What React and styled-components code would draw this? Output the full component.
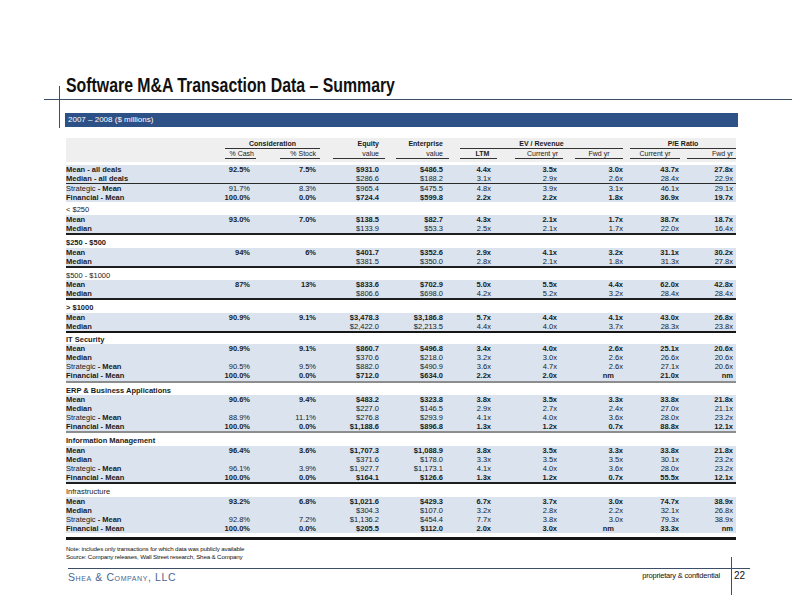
import React from "react";
import styled, { createGlobalStyle } from "styled-components";

const GlobalStyle = createGlobalStyle`
  html, body {
    margin: 0;
    padding: 0;
    background: #ffffff;
  }
  body {
    font-family: "Liberation Sans", Arial, sans-serif;
    color: #111;
  }
`;

const Page = styled.div`
  position: relative;
  width: 792px;
  height: 612px;
  overflow: hidden;
  background: #fff;

  &::before {
    content: "";
    position: absolute;
    left: 59px;
    top: 86px;
    width: 1px;
    height: 42px;
    background: #3c4f66;
  }
`;

const TitleRow = styled.div`
  box-sizing: border-box;
  height: 100px;
  margin-left: 44px;
  padding: 0 0 4px 22px;
  border-bottom: 1px solid #3c4f66;
  display: flex;
  align-items: flex-end;
`;

/* the original face is a condensed grotesque; squeeze Arial-metric bold to its width */
const Title = styled.h1`
  margin: 0;
  font-family: "Liberation Sans", Arial, sans-serif;
  font-weight: bold;
  font-size: 21px;
  line-height: 21px;
  white-space: nowrap;
  color: #111;
  transform: scaleX(0.755);
  transform-origin: left bottom;
`;

const Main = styled.div`
  margin-left: 65px;
  width: 673px;
`;

const SubBar = styled.div`
  margin-top: 13px;
  height: 14px;
  padding-left: 3px;
  background: #2d5186;
  color: #fff;
  font-size: 8px;
  font-weight: normal;
  line-height: 14px;
`;

const TableWrap = styled.div`
  margin: 11px 0 0 1px;
`;

const Grid = styled.table`
  border-collapse: collapse;
  table-layout: fixed;
  width: 670px;
  font-size: 7.5px;
  color: #1a1a1a;
`;

const HeadCell = styled.th`
  background: #efefef;
  padding: 0;
  height: ${(p) => p.$h}px;
  vertical-align: bottom;
  font-weight: bold;
  font-size: 7px;
  text-align: ${(p) => p.$align || "right"};
`;

const HeadLabel = styled.div`
  margin: 0 ${(p) => p.$mr ?? 2}px ${(p) => p.$mb ?? 0}px ${(p) => p.$ml ?? 10}px;
  padding-right: ${(p) => p.$pr ?? 4}px;
  line-height: 9px;
  border-bottom: ${(p) => (p.$line ? "1px solid #333" : "1px solid transparent")};
  font-weight: ${(p) => (p.$light ? "normal" : "bold")};
`;

const SpacerCell = styled.td`
  height: 3px;
  padding: 0;
`;

const EndRule = styled.td`
  height: 4px;
  padding: 0;
  border-bottom: 3px solid #151515;
`;

const BodyRow = styled.tr`
  background: ${(p) => (p.$blue ? "#dae3ee" : "#fff")};

  & > td {
    border-bottom: ${(p) =>
      p.$line === "thick"
        ? "2.5px solid #151515"
        : p.$line === "dark"
        ? "2px solid #1e1e1e"
        : p.$line === "thin"
        ? "1.5px solid #2a2a2a"
        : p.$line === "light"
        ? "2px solid #8d8d8d"
        : "none"};
  }
`;

const Cell = styled.td`
  height: 9.1px;
  padding: 0 ${(p) => p.$pr}px 0 0;
  line-height: 9px;
  text-align: right;
  white-space: nowrap;
  font-weight: ${(p) => (p.$bold ? "bold" : "normal")};
`;

const LabelCell = styled.td`
  height: 9.1px;
  padding: 0;
  line-height: 9px;
  text-align: left;
  white-space: nowrap;
  font-weight: bold;
`;

const Plain = styled.span`
  font-weight: normal;
`;

const GroupCell = styled.td`
  height: ${(p) => p.$h}px;
  padding: 0 0 0.5px 0;
  vertical-align: bottom;
  line-height: 9px;
  font-weight: ${(p) => (p.$light ? "normal" : "bold")};
`;

const Notes = styled.div`
  margin: 5px 0 0 1px;
  font-size: 6.2px;
  line-height: 8px;
  letter-spacing: -0.15px;
  color: #111;
`;

const Footer = styled.div`
  margin: 7px 0 0 68px;
  width: 682px;
  border-top: 1px solid #3c4f66;
  display: flex;
  align-items: flex-start;
`;

const Company = styled.div`
  padding-top: 2px;
  font-variant: small-caps;
  font-size: 10.5px;
  letter-spacing: 0.6px;
  color: #4a6690;
  flex: 1;
`;

const Confidential = styled.div`
  padding: 2px 11px 0 0;
  font-size: 7.5px;
  letter-spacing: -0.2px;
  color: #111;
`;

const PageNum = styled.div`
  position: relative;
  width: 16px;
  padding: 1px 0 0 3px;
  font-size: 10px;
  line-height: 11px;
  color: #111;

  &::before {
    content: "";
    position: absolute;
    left: 0;
    top: -12px;
    width: 1px;
    height: 38px;
    background: #3c4f66;
  }
`;

const cols = [130, 60, 66, 63, 64, 48, 66, 66, 56, 51];

const groups = [
  {
    title: null,
    rows: [
      ["Mean - all deals", "92.5%", "7.5%", "$931.0", "$486.5", "4.4x", "3.5x", "3.0x", "43.7x", "27.8x"],
      ["Median - all deals", "", "", "$286.6", "$188.2", "3.1x", "2.9x", "2.6x", "28.4x", "22.9x"],
      ["Strategic - Mean", "91.7%", "8.3%", "$965.4", "$475.5", "4.8x", "3.9x", "3.1x", "46.1x", "29.1x"],
      ["Financial - Mean", "100.0%", "0.0%", "$724.4", "$599.8", "2.2x", "2.2x", "1.8x", "36.9x", "19.7x"],
    ],
    lines: { 1: "thin" },
  },
  {
    title: "< $250",
    light: true,
    rows: [
      ["Mean", "93.0%", "7.0%", "$138.5", "$82.7", "4.3x", "2.1x", "1.7x", "38.7x", "18.7x"],
      ["Median", "", "", "$133.9", "$53.3", "2.5x", "2.1x", "1.7x", "22.0x", "16.4x"],
    ],
    lines: { 1: "dark" },
  },
  {
    title: "$250 - $500",
    rows: [
      ["Mean", "94%", "6%", "$401.7", "$352.6", "2.9x", "4.1x", "3.2x", "31.1x", "30.2x"],
      ["Median", "", "", "$381.5", "$350.0", "2.8x", "2.1x", "1.8x", "31.3x", "27.8x"],
    ],
    lines: { 1: "dark" },
  },
  {
    title: "$500 - $1000",
    light: true,
    rows: [
      ["Mean", "87%", "13%", "$833.6", "$702.9", "5.0x", "5.5x", "4.4x", "62.0x", "42.8x"],
      ["Median", "", "", "$806.6", "$698.0", "4.2x", "5.2x", "3.2x", "28.4x", "28.4x"],
    ],
    lines: { 1: "dark" },
  },
  {
    title: "> $1000",
    rows: [
      ["Mean", "90.9%", "9.1%", "$3,478.3", "$3,186.8", "5.7x", "4.4x", "4.1x", "43.0x", "26.8x"],
      ["Median", "", "", "$2,422.0", "$2,213.5", "4.4x", "4.0x", "3.7x", "28.3x", "23.8x"],
    ],
    lines: { 1: "thick" },
  },
  {
    title: "IT Security",
    short: true,
    rows: [
      ["Mean", "90.9%", "9.1%", "$860.7", "$496.8", "3.4x", "4.0x", "2.6x", "25.1x", "20.6x"],
      ["Median", "", "", "$370.6", "$218.0", "3.2x", "3.0x", "2.6x", "26.6x", "20.6x"],
      ["Strategic - Mean", "90.5%", "9.5%", "$882.0", "$490.9", "3.6x", "4.7x", "2.6x", "27.1x", "20.6x"],
      ["Financial - Mean", "100.0%", "0.0%", "$712.0", "$634.0", "2.2x", "2.0x", "nm", "21.0x", "nm"],
    ],
    lines: { 3: "light" },
  },
  {
    title: "ERP & Business Applications",
    rows: [
      ["Mean", "90.6%", "9.4%", "$483.2", "$323.8", "3.8x", "3.5x", "3.3x", "33.8x", "21.8x"],
      ["Median", "", "", "$227.0", "$146.5", "2.9x", "2.7x", "2.4x", "27.0x", "21.1x"],
      ["Strategic - Mean", "88.9%", "11.1%", "$276.8", "$293.9", "4.1x", "4.0x", "3.6x", "28.0x", "23.2x"],
      ["Financial - Mean", "100.0%", "0.0%", "$1,188.6", "$896.8", "1.3x", "1.2x", "0.7x", "88.8x", "12.1x"],
    ],
    lines: { 3: "light" },
  },
  {
    title: "Information Management",
    rows: [
      ["Mean", "96.4%", "3.6%", "$1,707.3", "$1,088.9", "3.8x", "3.5x", "3.3x", "33.8x", "21.8x"],
      ["Median", "", "", "$371.6", "$178.0", "3.3x", "3.5x", "3.5x", "30.1x", "23.2x"],
      ["Strategic - Mean", "96.1%", "3.9%", "$1,927.7", "$1,173.1", "4.1x", "4.0x", "3.6x", "28.0x", "23.2x"],
      ["Financial - Mean", "100.0%", "0.0%", "$164.1", "$126.6", "1.3x", "1.2x", "0.7x", "55.5x", "12.1x"],
    ],
    lines: { 3: "dark" },
  },
  {
    title: "Infrastructure",
    light: true,
    rows: [
      ["Mean", "93.2%", "6.8%", "$1,021.6", "$429.3", "6.7x", "3.7x", "3.0x", "74.7x", "38.9x"],
      ["Median", "", "", "$304.3", "$107.0", "3.2x", "2.8x", "2.2x", "32.1x", "26.8x"],
      ["Strategic - Mean", "92.8%", "7.2%", "$1,136.2", "$454.4", "7.7x", "3.8x", "3.0x", "79.3x", "38.9x"],
      ["Financial - Mean", "100.0%", "0.0%", "$205.5", "$112.0", "2.0x", "3.0x", "nm", "33.3x", "nm"],
    ],
    lines: {},
  },
];

const Label = ({ text }) => {
  if (text.startsWith("Strategic")) {
    return (
      <>
        <Plain>Strategic</Plain>
        {text.slice(9)}
      </>
    );
  }
  return text;
};

const isBold = (label) => label.startsWith("Mean") || label.startsWith("Financial");

const padFor = (i, value) => {
  if (i === 9) return 3;
  if (value === "nm") return 15;
  return 6;
};

const App = () => {
  return (
    <Page>
      <GlobalStyle />
      <TitleRow>
        <Title>Software M&amp;A Transaction Data – Summary</Title>
      </TitleRow>
      <Main>
        <SubBar>2007 – 2008 ($ millions)</SubBar>
        <TableWrap>
          <Grid>
            <colgroup>
              {cols.map((w, i) => (
                <col key={i} style={{ width: w }} />
              ))}
            </colgroup>
            <thead>
              <tr>
                <HeadCell $h={11} />
                <HeadCell $h={11} colSpan={2} $align="center">
                  <HeadLabel $line $ml={29} $mr={2} $pr={0}>
                    Consideration
                  </HeadLabel>
                </HeadCell>
                <HeadCell $h={11}>
                  <HeadLabel $mr={0} $pr={6}>Equity</HeadLabel>
                </HeadCell>
                <HeadCell $h={11}>
                  <HeadLabel $mr={0} $pr={6}>Enterprise</HeadLabel>
                </HeadCell>
                <HeadCell $h={11} colSpan={3} $align="center">
                  <HeadLabel $line $ml={11} $mr={6} $pr={0}>
                    EV / Revenue
                  </HeadLabel>
                </HeadCell>
                <HeadCell $h={11} colSpan={2} $align="center">
                  <HeadLabel $line $ml={1} $mr={0} $pr={0}>
                    P/E Ratio
                  </HeadLabel>
                </HeadCell>
              </tr>
              <tr>
                <HeadCell $h={13} />
                <HeadCell $h={13}>
                  <HeadLabel $line $light $ml={29} $mr={-4} $pr={6} $mb={3}>
                    % Cash
                  </HeadLabel>
                </HeadCell>
                <HeadCell $h={13}>
                  <HeadLabel $line $light $ml={24} $mr={2} $pr={4} $mb={3}>
                    % Stock
                  </HeadLabel>
                </HeadCell>
                <HeadCell $h={13}>
                  <HeadLabel $line $light $ml={11} $mr={0} $pr={6} $mb={3}>
                    value
                  </HeadLabel>
                </HeadCell>
                <HeadCell $h={13}>
                  <HeadLabel $line $light $ml={11} $mr={0} $pr={6} $mb={3}>
                    value
                  </HeadLabel>
                </HeadCell>
                <HeadCell $h={13} $align="center">
                  <HeadLabel $line $ml={11} $mr={-8} $pr={0} $mb={3}>
                    LTM
                  </HeadLabel>
                </HeadCell>
                <HeadCell $h={13} $align="center">
                  <HeadLabel $line $light $ml={18} $mr={-7} $pr={0} $mb={3}>
                    Current yr
                  </HeadLabel>
                </HeadCell>
                <HeadCell $h={13} $align="center">
                  <HeadLabel $line $light $ml={12} $mr={6} $pr={0} $mb={3}>
                    Fwd yr
                  </HeadLabel>
                </HeadCell>
                <HeadCell $h={13} $align="center">
                  <HeadLabel $line $light $ml={1} $mr={5} $pr={0} $mb={3}>
                    Current yr
                  </HeadLabel>
                </HeadCell>
                <HeadCell $h={13}>
                  <HeadLabel $line $light $ml={2} $mr={0} $pr={3} $mb={3}>
                    Fwd yr
                  </HeadLabel>
                </HeadCell>
              </tr>
              <tr>
                <SpacerCell colSpan={10} />
              </tr>
            </thead>
            <tbody>
              {groups.map((g, gi) => (
                <React.Fragment key={gi}>
                  {g.title && (
                    <tr>
                      <GroupCell colSpan={10} $light={g.light} $h={g.short ? 10.5 : 12}>
                        {g.title}
                      </GroupCell>
                    </tr>
                  )}
                  {g.rows.map((r, ri) => (
                    <BodyRow key={ri} $blue $line={g.lines[ri]}>
                      <LabelCell>
                        <Label text={r[0]} />
                      </LabelCell>
                      {r.slice(1).map((v, vi) => (
                        <Cell key={vi} $bold={isBold(r[0])} $pr={padFor(vi + 1, v)}>
                          {v}
                        </Cell>
                      ))}
                    </BodyRow>
                  ))}
                </React.Fragment>
              ))}
              <tr>
                <EndRule colSpan={10} />
              </tr>
            </tbody>
          </Grid>
        </TableWrap>
        <Notes>
          <div>Note: includes only transactions for which data was publicly available</div>
          <div>Source: Company releases, Wall Street research, Shea &amp; Company</div>
        </Notes>
      </Main>
      <Footer>
        <Company>Shea &amp; Company, LLC</Company>
        <Confidential>proprietary &amp; confidential</Confidential>
        <PageNum>22</PageNum>
      </Footer>
    </Page>
  );
};

export default App;
